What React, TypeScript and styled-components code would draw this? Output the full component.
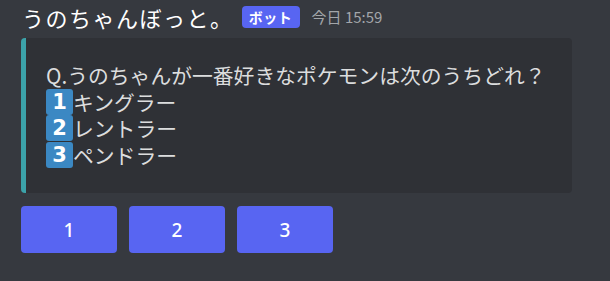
import React from "react";
import styled, { createGlobalStyle } from "styled-components";

const Global = createGlobalStyle`
  html, body { margin: 0; padding: 0; background: #36393f; }
  body { font-family: "Noto Sans CJK JP", "Noto Sans", sans-serif; }
`;

const Page = styled.div`
  width: 610px;
  height: 281px;
  background: #36393f;
  box-sizing: border-box;
  padding: 4px 38px 0 21px;
  display: flex;
  flex-direction: column;
`;

const Header = styled.div`
  display: flex;
  align-items: center;
  height: 26px;
`;

const Name = styled.span`
  color: #ffffff;
  font-size: 22px;
  line-height: 26px;
  margin-left: 1px;
  letter-spacing: 1.5px;
`;

const BotTag = styled.span`
  margin-left: 8px;
  background: #5865f2;
  color: #fff;
  font-size: 14px;
  font-weight: 700;
  height: 22px;
  line-height: 22px;
  border-radius: 4px;
  width: 58px;
  text-align: center;
  letter-spacing: 0.5px;
`;

const Time = styled.span`
  margin-left: 12px;
  color: #a3a6aa;
  font-size: 15px;
  line-height: 22px;
`;

const Embed = styled.div`
  margin-top: 8px;
  background: #2f3136;
  border-left: 5px solid #3ca3aa;
  border-radius: 4px;
  padding: 24px 20px 25px 20px;
  display: flex;
  flex-direction: column;
`;

const Line = styled.div`
  color: #dcddde;
  font-size: 20.8px;
  line-height: 26.5px;
  display: flex;
  align-items: center;
  white-space: nowrap;
`;

const Keycap = styled.span`
  display: inline-flex;
  align-items: center;
  justify-content: center;
  width: 27px;
  height: 26px;
  background: #3b88c3;
  border-radius: 3px;
  color: #fff;
  font-family: "DejaVu Sans", sans-serif;
  font-weight: 700;
  font-size: 21px;
`;

const Buttons = styled.div`
  margin-top: 13px;
  display: flex;
  gap: 12px;
`;

const Button = styled.button`
  width: 96px;
  height: 47px;
  border: none;
  border-radius: 4px;
  background: #5865f2;
  color: #fff;
  font-family: "Noto Sans", sans-serif;
  font-size: 19px;
  font-weight: 500;
  padding: 0;
`;

const options = ["キングラー", "レントラー", "ペンドラー"];

export default function App() {
  return (
    <>
      <Global />
      <Page>
        <Header>
          <Name>うのちゃんぼっと。</Name>
          <BotTag>ボット</BotTag>
          <Time>今日 15:59</Time>
        </Header>
        <Embed>
          <Line>Q.うのちゃんが一番好きなポケモンは次のうちどれ？</Line>
          {options.map((o, i) => (
            <Line key={o}>
              <Keycap>{i + 1}</Keycap>
              {o}
            </Line>
          ))}
        </Embed>
        <Buttons>
          {[1, 2, 3].map((n) => (
            <Button key={n}>{n}</Button>
          ))}
        </Buttons>
      </Page>
    </>
  );
}
